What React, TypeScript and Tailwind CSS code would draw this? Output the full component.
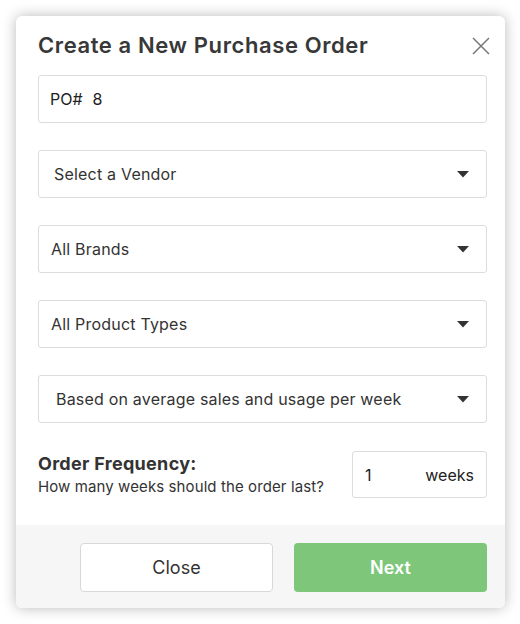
import { useState } from "react";

function Caret() {
  return (
    <svg width="12" height="7" viewBox="0 0 12 7" className="shrink-0">
      <path d="M0 0 L12 0 L6 6.5 Z" fill="#333" />
    </svg>
  );
}

function SelectBox({ label, indent }: { label: string; indent: string }) {
  return (
    <div
      className={`flex h-[48px] items-center justify-between rounded-[3px] border border-[#dcdcdc] bg-white pr-[17px] ${indent}`}
    >
      <span className="text-[16px] tracking-[0.2px] text-[#333]">{label}</span>
      <Caret />
    </div>
  );
}

export default function App() {
  const [weeks, setWeeks] = useState("1");

  return (
    <div className="min-h-[624px] bg-white pl-[16px] pt-[16px] font-['Inter',sans-serif]">
      <div className="w-[489px] overflow-hidden rounded-[6px] bg-white shadow-[0_0_14px_rgba(0,0,0,0.28)]">
        <div className="px-[18px] pl-[22px] pb-[27px]">
          <div className="flex h-[59px] items-center justify-between">
            <h2 className="text-[22px] font-semibold tracking-[0.6px] text-[#383838]">Create a New Purchase Order</h2>
            <button className="mr-[-4px] text-[#666]">
              <svg width="20" height="20" viewBox="0 0 20 20">
                <path d="M2 2 L18 18 M18 2 L2 18" stroke="#777" strokeWidth="1.5" />
              </svg>
            </button>
          </div>

          <div className="flex flex-col gap-[27px]">
            <div className="flex h-[48px] items-center rounded-[3px] border border-[#dcdcdc] bg-white pl-[11px] text-[16px] text-[#222]">
              <span>PO#</span>
              <span className="ml-[10px]">8</span>
            </div>
            <SelectBox label="Select a Vendor" indent="pl-[15px]" />
            <SelectBox label="All Brands" indent="pl-[12px]" />
            <SelectBox label="All Product Types" indent="pl-[12px]" />
            <SelectBox label="Based on average sales and usage per week" indent="pl-[17px]" />
          </div>

          <div className="mt-[28px] flex items-center justify-between">
            <div className="text-[#333]">
              <div className="text-[18px] font-bold leading-[22px] tracking-[0.3px]">Order Frequency:</div>
              <div className="mt-[2px] text-[15px] leading-[20px] tracking-[0.1px]">How many weeks should the order last?</div>
            </div>
            <div className="flex h-[47px] w-[135px] items-center rounded-[3px] border border-[#dcdcdc] pl-[12px] pr-[12px] text-[16px] text-[#222]">
              <input
                value={weeks}
                onChange={(e) => setWeeks(e.target.value)}
                className="w-[50px] bg-transparent outline-none"
              />
              <span className="ml-auto">weeks</span>
            </div>
          </div>
        </div>

        <div className="flex justify-end gap-[21px] bg-[#f6f6f6] pb-[16px] pr-[18px] pt-[18px]">
          <button className="h-[49px] w-[193px] rounded-[4px] border border-[#d8d8d8] bg-white text-[18px] text-[#333]">
            Close
          </button>
          <button className="h-[49px] w-[193px] rounded-[4px] bg-[#7dc67a] text-[18px] font-semibold text-white">
            Next
          </button>
        </div>
      </div>
    </div>
  );
}
